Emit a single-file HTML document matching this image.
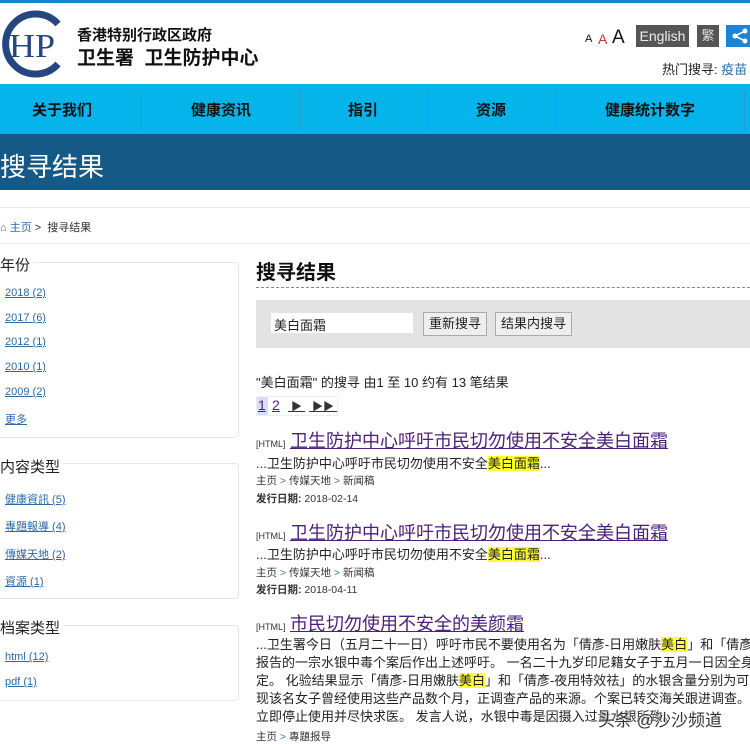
<!DOCTYPE html>
<html><head><meta charset="utf-8"><style>
*{margin:0;padding:0;box-sizing:border-box}
body{width:750px;height:744px;overflow:hidden;background:#fff;font-family:"Liberation Sans","Noto Sans CJK SC",sans-serif;color:#222;position:relative}
.a{position:absolute;white-space:nowrap}
.nav{position:absolute;top:84px;left:0;width:750px;height:50px;background:#04b4ea}
.nav span{position:absolute;top:15px;font-size:15px;font-weight:bold;color:#111;transform:translateX(-50%)}
.sep{position:absolute;top:6px;width:1px;height:40px;background:#2d9bc6}
.box{position:absolute;left:-6px;width:245px;border:1px solid #e6e6e6;border-radius:4px}
.sl{font-size:11px;color:#2a6aa5;text-decoration:underline}
.t{font-size:18px;color:#4b1f7a;text-decoration:underline}
.h{font-size:9px;color:#333}
.s{font-size:13px;color:#222}
.hl{background:#ffff33}
.b{font-size:10.5px;color:#333}
.b i{font-style:normal;color:#3a7ab5}
</style></head><body>
<div class="a" style="top:0;left:0;width:750px;height:3px;background:#0e86c8"></div>
<svg class="a" style="left:0;top:10px" width="66" height="68" viewBox="0 0 66 68">
<path d="M58 14 A30 30 0 1 0 58 54" fill="none" stroke="#25467f" stroke-width="7"/>
<text x="9" y="47" font-family="Liberation Serif,serif" font-size="34" fill="#25467f" textLength="46" lengthAdjust="spacingAndGlyphs">HP</text>
</svg>
<div class="a" style="left:77px;top:24px;font-size:15px;font-weight:bold;color:#111">香港特别行政区政府</div>
<div class="a" style="left:77px;top:43px;font-size:19px;font-weight:bold;color:#111">卫生署&nbsp; 卫生防护中心</div>
<div class="a" style="left:585px;top:33px;font-size:11px;color:#111">A</div>
<div class="a" style="left:598px;top:31px;font-size:14px;color:#c8303a">A</div>
<div class="a" style="left:612px;top:27px;font-size:19px;color:#111">A</div>
<div class="a" style="left:636px;top:25px;width:53px;height:22px;background:#555;color:#eee;font-size:14px;text-align:center;line-height:22px">English</div>
<div class="a" style="left:697px;top:25px;width:22px;height:22px;background:#555;color:#ddd;font-size:13px;text-align:center;line-height:22px">繁</div>
<div class="a" style="left:726px;top:25px;width:24px;height:22px;background:#1b84d4"></div>
<svg class="a" style="left:730px;top:28px" width="20" height="16"><circle cx="15" cy="3" r="2.5" fill="#fff"/><circle cx="5" cy="8" r="2.5" fill="#fff"/><circle cx="15" cy="13" r="2.5" fill="#fff"/><path d="M15 3L5 8L15 13" stroke="#fff" stroke-width="1.6" fill="none"/></svg>
<div class="a" style="left:662px;top:59px;font-size:13px;color:#222">热门搜寻: <span style="color:#2a6aa5">疫苗</span></div>
<div class="nav">
<span style="left:62px">关于我们</span><div class="sep" style="left:141px"></div>
<span style="left:221px">健康资讯</span><div class="sep" style="left:300px"></div>
<span style="left:363px">指引</span><div class="sep" style="left:427px"></div>
<span style="left:491px">资源</span><div class="sep" style="left:555px"></div>
<span style="left:650px">健康统计数字</span><div class="sep" style="left:744px"></div>
</div>
<div class="a" style="top:134px;left:0;width:750px;height:56px;background:#155a87"></div>
<div class="a" style="left:0;top:147px;font-size:26px;color:#fff">搜寻结果</div>
<div class="a" style="top:207px;left:0;width:750px;height:1px;background:#e8e8e8"></div>
<div class="a" style="left:0;top:219px;font-size:11px;color:#333"><span style="color:#2a6aa5">⌂ 主页</span> &gt;&nbsp; 搜寻结果</div>
<div class="a" style="top:243px;left:0;width:750px;height:1px;background:#e8e8e8"></div>
<div class="box" style="top:262px;height:176px"></div>
<div class="a" style="left:0;top:254px;font-size:15px;background:#fff;padding-right:3px">年份</div>
<div class="a sl" style="left:5px;top:287px">2018 (2)</div>
<div class="a sl" style="left:5px;top:312px">2017 (6)</div>
<div class="a sl" style="left:5px;top:336px">2012 (1)</div>
<div class="a sl" style="left:5px;top:361px">2010 (1)</div>
<div class="a sl" style="left:5px;top:386px">2009 (2)</div>
<div class="a sl" style="left:5px;top:411px">更多</div>
<div class="box" style="top:463px;height:136px"></div>
<div class="a" style="left:0;top:456px;font-size:15px;background:#fff;padding-right:3px">内容类型</div>
<div class="a sl" style="left:5px;top:491px">健康資訊 (5)</div>
<div class="a sl" style="left:5px;top:518px">專題報導 (4)</div>
<div class="a sl" style="left:5px;top:546px">傳媒天地 (2)</div>
<div class="a sl" style="left:5px;top:573px">資源 (1)</div>
<div class="box" style="top:625px;height:76px"></div>
<div class="a" style="left:0;top:617px;font-size:15px;background:#fff;padding-right:3px">档案类型</div>
<div class="a sl" style="left:5px;top:651px">html (12)</div>
<div class="a sl" style="left:5px;top:676px">pdf (1)</div>

<div class="a" style="left:256px;top:256px;font-size:20px;font-weight:bold;color:#111">搜寻结果</div>
<div class="a" style="left:256px;top:287px;width:494px;border-top:1px dashed #888"></div>
<div class="a" style="left:256px;top:300px;width:494px;height:48px;background:#e3e3e3"></div>
<div class="a" style="left:271px;top:313px;width:142px;height:20px;background:#fff;font-size:13px;padding:2px 3px">美白面霜</div>
<div class="a" style="left:423px;top:312px;width:64px;height:24px;background:#eee;border:1px solid #aaa;font-size:13px;text-align:center;line-height:22px">重新搜寻</div>
<div class="a" style="left:495px;top:312px;width:77px;height:24px;background:#eee;border:1px solid #aaa;font-size:13px;text-align:center;line-height:22px">结果内搜寻</div>

<div class="a s" style="left:256px;top:372px">"美白面霜" 的搜寻 由1 至 10 约有 13 笔结果</div>
<div class="a" style="left:256px;top:396px;width:82px;height:20px;border:1px solid #eee"></div>
<div class="a" style="left:257px;top:397px;width:11px;height:18px;background:#dcdcf5"></div>
<div class="a" style="left:258px;top:397px;font-size:14px;color:#4b1f7a;text-decoration:underline">1</div>
<div class="a" style="left:272px;top:397px;font-size:14px;color:#4b1f7a;text-decoration:underline">2</div>
<div class="a" style="left:288px;top:398px;font-size:11px;color:#333;text-decoration:underline">&nbsp;▶&nbsp;</div>
<div class="a" style="left:309px;top:398px;font-size:11px;color:#333;text-decoration:underline">&nbsp;▶▶&nbsp;</div>

<div class="a" style="left:256px;top:427px"><span class="h">[HTML]</span> <span class="t">卫生防护中心呼吁市民切勿使用不安全美白面霜</span></div>
<div class="a s" style="left:256px;top:453px">...卫生防护中心呼吁市民切勿使用不安全<span class="hl">美白面霜</span>...</div>
<div class="a b" style="left:256px;top:473px">主页 <i>&gt;</i> 传媒天地 <i>&gt;</i> 新闻稿</div>
<div class="a b" style="left:256px;top:491px"><b>发行日期:</b> 2018-02-14</div>

<div class="a" style="left:256px;top:519px"><span class="h">[HTML]</span> <span class="t">卫生防护中心呼吁市民切勿使用不安全美白面霜</span></div>
<div class="a s" style="left:256px;top:544px">...卫生防护中心呼吁市民切勿使用不安全<span class="hl">美白面霜</span>...</div>
<div class="a b" style="left:256px;top:565px">主页 <i>&gt;</i> 传媒天地 <i>&gt;</i> 新闻稿</div>
<div class="a b" style="left:256px;top:582px"><b>发行日期:</b> 2018-04-11</div>

<div class="a" style="left:256px;top:610px"><span class="h">[HTML]</span> <span class="t">市民切勿使用不安全的美颜霜</span></div>
<div class="a s" style="left:256px;top:636px;line-height:18px">...卫生署今日（五月二十一日）呼吁市民不要使用名为「倩彥-日用嫩肤<span class="hl">美白</span>」和「倩彥<br>报告的一宗水银中毒个案后作出上述呼吁。 一名二十九岁印尼籍女子于五月一日因全身<br>定。 化验结果显示「倩彥-日用嫩肤<span class="hl">美白</span>」和「倩彥-夜用特效祛」的水银含量分别为可<br>现该名女子曾经使用这些产品数个月，正调查产品的来源。个案已转交海关跟进调查。<br>立即停止使用并尽快求医。 发言人说，水银中毒是因摄入过量水银所致。</div>
<div class="a b" style="left:256px;top:729px">主页 <i>&gt;</i> 專題报导</div>
<div class="a" style="left:598px;top:706px;font-size:17px;color:#333;text-shadow:0 0 2px #fff,0 0 2px #fff">头条 @沙沙频道</div>
</body></html>
